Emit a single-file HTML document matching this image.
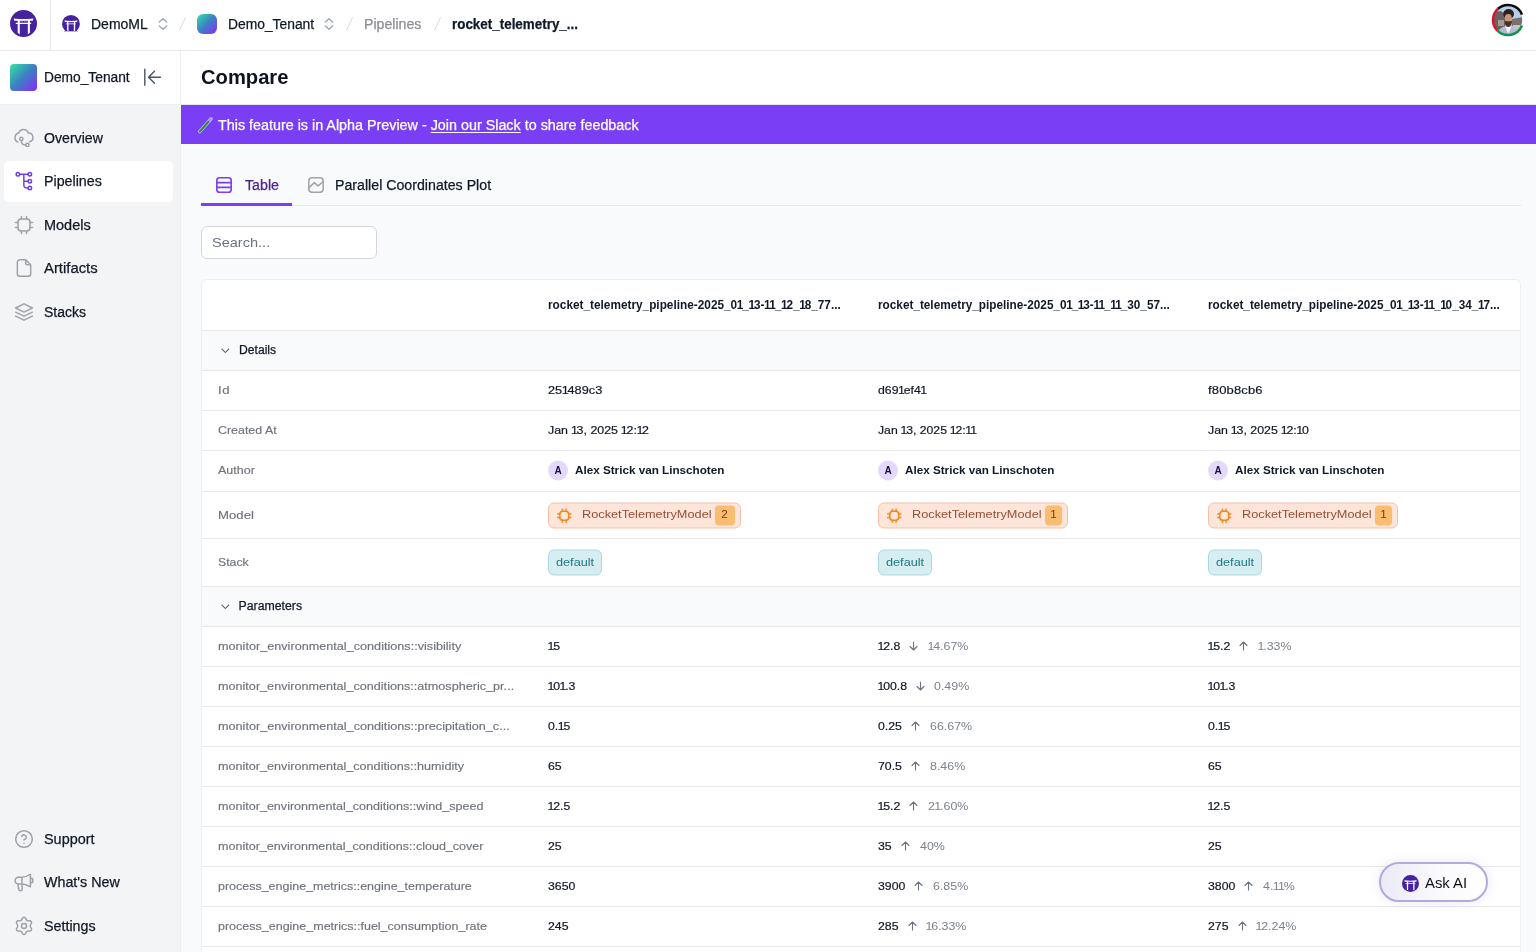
<!DOCTYPE html>
<html lang="en">
<head>
<meta charset="utf-8">
<title>Compare</title>
<style>
*{box-sizing:border-box;margin:0;padding:0}
html,body{width:1536px;height:952px;overflow:hidden;background:#f9fafb;font-family:"Liberation Sans",sans-serif;color:#111827}
#wrap{position:absolute;left:0;top:0;width:1536px;height:952px;will-change:transform}
.t{white-space:nowrap;display:inline-block;--ls:0px;letter-spacing:var(--ls);transform-origin:0 50%}
.o{font-weight:inherit;margin-left:-.5px;letter-spacing:calc(var(--ls) - 1.1px)}
.oh{font-weight:inherit;margin-left:-.4px;letter-spacing:calc(var(--ls) - 1.1px)}
svg{display:block;overflow:visible}
#top{position:absolute;left:0;top:0;width:1536px;height:51px;background:#fff;border-bottom:1px solid #e8e8ea}
#top .vdiv{position:absolute;left:50px;top:0;width:1px;height:50px;background:#e8e8ea}
.a{position:absolute}
.crumb{position:absolute;top:15px;height:18px;line-height:18px;font-size:14px;-webkit-text-stroke:.25px}
#side{position:absolute;left:0;top:51px;width:181px;height:901px;background:#f3f4f6;border-right:1px solid #eceef0}
#sidehead{position:absolute;left:0;top:0;width:180px;height:54px;background:#fff;border-bottom:1px solid #eceef0}
.nav{position:absolute;left:4px;width:169px;height:41px;border-radius:5px}
.nav .t{position:absolute;left:40px;top:11px;height:18px;line-height:18px;font-size:14px;color:#111827;-webkit-text-stroke:.25px}
.nav svg{position:absolute;left:10px;top:10px;width:20px;height:20px}
.nav.on{background:#fff}
#head{position:absolute;left:181px;top:51px;width:1355px;height:54px;background:#fff;border-bottom:1px solid #e5e7eb}
#banner{position:absolute;left:181px;top:105px;width:1355px;height:39px;background:#7a3ef4;color:#fff;font-size:14px;-webkit-text-stroke:.25px}
#tabs{position:absolute;left:201px;top:165px;width:1320px;height:41px;border-bottom:1px solid #e5e7eb;-webkit-text-stroke:.25px}
#search{position:absolute;left:201px;top:226px;width:176px;height:33px;border:1px solid #d5d6da;border-radius:6px;background:#fff}
#tbl{position:absolute;left:201px;top:279px;width:1320px;height:700px;background:#fff;border:1px solid #eceef1;border-radius:6px 6px 0 0;overflow:hidden}
.row{position:absolute;left:0;width:1318px;border-bottom:1px solid #e7e8ea;font-size:11.700px}
.row.sec{background:#f9fafb}
.c{position:absolute;top:0;height:100%;display:flex;align-items:center;transform:translateY(-.5px)}
.c .t{position:relative;top:-1px}
.c .t.nt{top:0}
.c .mb .t{top:-2.500px}
.c .sb .t{top:-1.500px}
.r41 .c{height:39px}
.c0{left:16px;color:#6e727a;-webkit-text-stroke:.15px}
.c1{left:346px}.c2{left:676px}.c3{left:1006px}
.v{font-size:11.600px;color:#111827;-webkit-text-stroke:.2px #111827;transform:scaleX(1.06)}
.p{font-size:11.600px;color:#7b818c;transform:scaleX(1.07)}
.arr{width:9px;height:9px;margin:0 9.500px 0 10.500px}
.av{width:20px;height:20px;border-radius:50%;background:#e4d8fd;margin-right:7px;display:flex;align-items:center;justify-content:center;font-weight:700;font-size:10px;color:#1a0f3a}
.mb{margin-top:2px;height:26.500px;border:1px solid #f6bfa8;background:#fde5da;border-radius:6px;display:flex;align-items:center;padding-left:8px;padding-right:5px}
.mb svg{width:16.500px;height:16.500px;margin-right:9.500px;margin-left:-1px}
.mb .n{width:20px;height:20px;background:#f8bd70;border-radius:4px;margin-left:3px;display:flex;align-items:center;justify-content:center}
.sb{height:26px;border:1px solid #a9d9e0;background:#d6edf1;border-radius:6px;display:flex;align-items:center;padding:0 7px}
</style>
</head>
<body>
<div id="wrap">
<div id="top">
  <div class="a" style="left:10px;top:10px"><svg viewBox="0 0 28 28" width="27" height="27"><circle cx="14" cy="14" r="14" fill="#4523a0"/><path d="M3.800 8.800Q14 10 24.200 8.800L23.600 11.100H4.400zM6 13.200h16v1.300H6zM8 11h2.100v14.300a14 14 0 0 1-2.100-1.600zM18.500 11h2.100v12.700a14 14 0 0 1-2.100 1.600z" fill="#fff"/><path d="M11.300 11.100v1.200M12.800 11.100v1.200M15.200 11.100v1.200M16.700 11.100v1.200" stroke="#fff" stroke-width=".7" opacity=".55"/></svg></div>
  <div class="vdiv"></div>
  <div class="a" style="left:61.500px;top:14.800px;width:18px;height:16.700px;overflow:hidden"><svg viewBox="0 0 28 28" width="17.9" height="17.9"><circle cx="14" cy="14" r="14" fill="#4523a0"/><path d="M3.800 8.800Q14 10 24.200 8.800L23.600 11.100H4.400zM6 13.200h16v1.300H6zM8 11h2.100v14.300a14 14 0 0 1-2.100-1.600zM18.500 11h2.100v12.700a14 14 0 0 1-2.100 1.600z" fill="#fff"/><path d="M11.300 11.100v1.200M12.800 11.100v1.200M15.200 11.100v1.200M16.700 11.100v1.200" stroke="#fff" stroke-width=".7" opacity=".55"/></svg></div>
  <div class="a" style="left:63.500px;top:31.300px;width:14px;height:1px;background:#bdbdc2;border-radius:1px"></div>
  <div class="crumb" style="left:91px;color:#111827"><span class="t " id="bDemoML">DemoML</span></div>
  <div class="a" style="left:158px;top:17.500px"><svg viewBox="0 0 10 12" width="10" height="12" fill="none" stroke="#9ca3af" stroke-width="1.300" stroke-linecap="round" stroke-linejoin="round"><path d="M1.300 4L5 .7l3.700 3.300M1.300 8L5 11.300 8.700 8"/></svg></div>
  <svg class="a" style="left:179px;top:17px" width="7" height="14" viewBox="0 0 7 14"><path d="M6.500.5L.5 13.500" stroke="#d9dadd" stroke-width="1" fill="none"/></svg>
  <div class="a" style="left:196.800px;top:13.500px;width:20.400px;height:20.400px;border-radius:6px;background:linear-gradient(135deg,#35e6a0 0%,#3b82c4 48%,#8b2cf5 100%)"></div>
  <div class="crumb" style="left:228px;color:#111827"><span class="t " id="bTenant" style="transform:scaleX(0.9885);margin-right:-1.00px">Demo_Tenant</span></div>
  <div class="a" style="left:323.500px;top:17.500px"><svg viewBox="0 0 10 12" width="10" height="12" fill="none" stroke="#9ca3af" stroke-width="1.300" stroke-linecap="round" stroke-linejoin="round"><path d="M1.300 4L5 .7l3.700 3.300M1.300 8L5 11.300 8.700 8"/></svg></div>
  <svg class="a" style="left:346px;top:17px" width="7" height="14" viewBox="0 0 7 14"><path d="M6.500.5L.5 13.500" stroke="#d9dadd" stroke-width="1" fill="none"/></svg>
  <div class="crumb" style="left:363.500px;color:#8b8e94"><span class="t " id="bPipelines" style="transform:scaleX(1.0091);margin-right:0.52px">Pipelines</span></div>
  <svg class="a" style="left:433.500px;top:17px" width="7" height="14" viewBox="0 0 7 14"><path d="M6.500.5L.5 13.500" stroke="#d9dadd" stroke-width="1" fill="none"/></svg>
  <div class="crumb" style="left:452px;color:#111827;font-weight:700"><span class="t " id="bRocket" style="transform:scaleX(0.9581);margin-right:-5.53px">rocket_telemetry_...</span></div>
  <svg class="a" style="left:1490.600px;top:3.200px" width="34" height="34" viewBox="0 0 34 34">
    <defs><clipPath id="avc"><circle cx="17" cy="17" r="14.200"/></clipPath><filter id="avb" x="-10%" y="-10%" width="120%" height="120%"><feGaussianBlur stdDeviation=".7"/></filter></defs>
    <g clip-path="url(#avc)"><g filter="url(#avb)">
      <rect x="0" y="0" width="34" height="34" fill="#b9cdea"/>
      <path d="M2 9l8-1 4 3v18H2z" fill="#6a625f"/>
      <rect x="7" y="17" width="6" height="6" fill="#a59b96"/>
      <path d="M21 16l11-2v9H21z" fill="#7b706b"/>
      <rect x="22" y="22" width="10" height="6" fill="#c9c4cb"/>
      <path d="M6 34c0-7 4-10.500 11-11.500 7 1 11 4.500 11 11.500z" fill="#b4bad4"/>
      <path d="M14.200 23.500L17.300 31l3.100-7.500z" fill="#f6f6fa"/>
      <ellipse cx="17.600" cy="11" rx="5.400" ry="5" fill="#2c2420"/>
      <ellipse cx="17.300" cy="15.300" rx="3.500" ry="4.400" fill="#c9967c"/>
      <path d="M13.700 17.500c1.500 1.200 5.500 1.200 7.200 0 .3 3.500-1.200 6.500-3.600 6.500s-3.900-3-3.600-6.500z" fill="#473127"/>
    </g></g>
    <path d="M6.770 6.030A15 15 0 0 1 31 11.620" fill="none" stroke="#0b0b0b" stroke-width="2.500"/>
    <path d="M6.770 6.030A15 15 0 0 0 6.390 27.610" fill="none" stroke="#d5122f" stroke-width="2.500"/>
    <path d="M6.390 27.610A15 15 0 0 0 30.950 22.520" fill="none" stroke="#12954a" stroke-width="2.500"/>
  </svg>
</div>
<div id="side">
  <div id="sidehead">
    <div class="a" style="left:10px;top:13px;width:27px;height:27px;border-radius:4px;background:linear-gradient(135deg,#35e6a0 0%,#3b82c4 48%,#8b2cf5 100%)"></div>
    <div class="a" style="left:44px;top:17px;height:18px;line-height:18px;font-size:14px;color:#111827;-webkit-text-stroke:.25px"><span class="t " id="sTenant" style="transform:scaleX(0.9830);margin-right:-1.48px">Demo_Tenant</span></div>
    <svg class="a" style="left:143px;top:17px" width="19" height="18" viewBox="0 0 19 18" fill="none" stroke="#4b5563" stroke-width="1.400" stroke-linecap="round" stroke-linejoin="round"><path d="M1.800 1.300v16M17.500 9.300H5.500M11.500 3.300l-6 6 6 6"/></svg>
  </div>
  <div class="nav" style="top:66.5px"><svg viewBox="0 0 24 24" fill="none" stroke="#9fa2a8" stroke-width="1.800" stroke-linecap="round" stroke-linejoin="round"><path d="M4.700 16.900A5.730 5.730 0 0 1 5.800 6 5.900 5.900 0 0 1 17.100 6a5.410 5.410 0 0 1 1.700 10.600"/><circle cx="8.800" cy="13.100" r="1.950"/><circle cx="16.100" cy="20.300" r="1.950"/><path d="M8.800 15.200c0 3.200 2.200 5.100 5.200 5.100"/></svg><span class="t " id="nOverview" style="transform:scaleX(1.0086);margin-right:0.50px">Overview</span></div><div class="nav on" style="top:110.0px"><svg viewBox="0 0 24 24" fill="none" stroke="#6e40e6" stroke-width="1.800" stroke-linecap="round" stroke-linejoin="round"><circle cx="4.700" cy="4" r="2.100"/><circle cx="19" cy="4" r="2.100"/><circle cx="19" cy="12.400" r="2.100"/><circle cx="19" cy="20.400" r="2.100"/><path d="M6.800 4h10.100M11.800 4v12.400c0 2.600 1.400 4 4 4h1.100M11.800 12.400h5.100"/></svg><span class="t " id="nPipelines" style="transform:scaleX(1.0179);margin-right:1.02px">Pipelines</span></div><div class="nav" style="top:153.5px"><svg viewBox="0 0 24 24" fill="none" stroke="#9fa2a8" stroke-width="1.800" stroke-linecap="round" stroke-linejoin="round"><rect x="4.800" y="4.800" width="14.400" height="14.400" rx="3.800"/><path d="M9 1.800v3M15 1.800v3M9 19.200v3M15 19.200v3M19.200 9h3M19.200 15h3M1.800 9h3M1.800 15h3"/></svg><span class="t " id="nModels" style="transform:scaleX(1.0340);margin-right:1.53px">Models</span></div><div class="nav" style="top:197.0px"><svg viewBox="0 0 24 24" fill="none" stroke="#9fa2a8" stroke-width="1.800" stroke-linecap="round" stroke-linejoin="round"><path d="M14 2.300V6.400c0 .9.700 1.600 1.600 1.600h4.100M14 2H7.200A3.200 3.200 0 0 0 4 5.200V18.800A3.200 3.200 0 0 0 7.200 22H16.800A3.200 3.200 0 0 0 20 18.800V8Z"/></svg><span class="t " id="nArtifacts" style="transform:scaleX(1.0602);margin-right:3.07px">Artifacts</span></div><div class="nav" style="top:240.5px"><svg viewBox="0 0 24 24" fill="none" stroke="#9fa2a8" stroke-width="1.800" stroke-linecap="round" stroke-linejoin="round"><path d="M2 12.200l10 4.800 10-4.800M2 16.900l10 4.800 10-4.800M2 7.200l10-5 10 5-10 5z"/></svg><span class="t " id="nStacks">Stacks</span></div><div class="nav" style="top:767.5px"><svg viewBox="0 0 24 24" fill="none" stroke="#9fa2a8" stroke-width="1.800" stroke-linecap="round" stroke-linejoin="round"><circle cx="12" cy="12" r="10"/><path d="M9.1 9a3 3 0 0 1 5.8 1c0 2-3 3-3 3M12 17h.01"/></svg><span class="t " id="nSupport" style="transform:scaleX(1.0304);margin-right:1.49px">Support</span></div><div class="nav" style="top:811.0px"><svg viewBox="0 0 24 24" fill="none" stroke="#9fa2a8" stroke-width="1.800" stroke-linecap="round" stroke-linejoin="round"><path d="M9.500 6.300H5.300a4 4 0 0 0 0 8h4.200M9.500 6.300c3.500 0 7.400-1.800 9.300-3.300.4-.3.900 0 .900.500v13.600c0 .5-.5.800-.900.500-1.900-1.500-5.800-3.300-9.300-3.300zM4.500 14.300l1.200 6.600c.15.900.900 1.500 1.800 1.500h.6c1.100 0 2-.900 1.800-2L9.500 14.300M19.700 7.300a3 3 0 0 1 0 6"/></svg><span class="t " id="nWhatsNew" style="transform:scaleX(1.0200);margin-right:1.48px">What's New</span></div><div class="nav" style="top:854.5px"><svg viewBox="0 0 24 24" fill="none" stroke="#9fa2a8" stroke-width="1.800" stroke-linecap="round" stroke-linejoin="round"><circle cx="12" cy="12" r="3"/><path d="M9.300 19.400l.6 1.300a2.300 2.300 0 0 0 4.200 0l.6-1.300a2.500 2.500 0 0 1 2.500-1.500l1.400.2a2.300 2.300 0 0 0 2.100-3.600l-.8-1.200a2.500 2.500 0 0 1 0-2.900l.8-1.200a2.300 2.300 0 0 0-2.100-3.600l-1.400.2a2.500 2.500 0 0 1-2.500-1.500l-.6-1.300a2.300 2.300 0 0 0-4.200 0l-.6 1.300a2.500 2.500 0 0 1-2.500 1.500l-1.400-.2a2.300 2.300 0 0 0-2.100 3.600l.8 1.200a2.500 2.500 0 0 1 0 2.900l-.8 1.200a2.300 2.300 0 0 0 2.100 3.600l1.400-.2a2.500 2.500 0 0 1 2.500 1.500z"/></svg><span class="t " id="nSettings" style="transform:scaleX(1.0202);margin-right:1.03px">Settings</span></div>
</div>
<div id="head"><div class="a" style="left:20px;top:13px;height:26px;line-height:26px;font-size:20px;font-weight:700;color:#0f1320"><span class="t " id="hCompare" style="transform:scaleX(1.0087);margin-right:0.76px">Compare</span></div></div>
<div id="banner">
  <svg class="a" style="left:16px;top:11px" width="18" height="18" viewBox="0 0 18 18" fill="none" stroke-linecap="round"><path d="M2.700 15.600L14 2.800" stroke="#cbbcfb" stroke-width="3.400"/><path d="M11.300 5.900L13.700 3.200" stroke="#9a86e6" stroke-width="1.900"/><path d="M2.900 15.400L11.100 6.100" stroke="#1f8f2e" stroke-width="2.100"/></svg>
  <div class="a" style="left:37px;top:11px;height:18px;line-height:18px"><span class="t " id="bnr" style="transform:scaleX(1.0237);margin-right:9.74px">This feature is in Alpha Preview - <u style="text-underline-offset:2px">Join our Slack</u> to share feedback</span></div>
</div>
<div id="tabs">
  <svg class="a" style="left:15px;top:12px" width="16" height="16" viewBox="0 0 16 16" fill="none" stroke="#7a3ef4" stroke-width="1.600" stroke-linejoin="round"><rect x=".8" y=".8" width="14.400" height="14.400" rx="2.800"/><path d="M.8 5.600h14.400M.8 10.400h14.400"/></svg>
  <div class="a" style="left:44px;top:11px;height:18px;line-height:18px;font-size:14px;color:#492592"><span class="t " id="tTable" style="transform:scaleX(1.0155);margin-right:0.51px">Table</span></div>
  <div class="a" style="left:0;top:38px;width:91px;height:3px;background:#7a3ef4"></div>
  <svg class="a" style="left:107px;top:12px" width="16" height="16" viewBox="0 0 16 16" fill="none" stroke="#a3a3a8" stroke-width="1.500" stroke-linejoin="round" stroke-linecap="round"><rect x=".8" y=".8" width="14.400" height="14.400" rx="3.200"/><path d="M1 10.600l5.400-5 3.600 3.300 5-4.200"/></svg>
  <div class="a" style="left:133.500px;top:11px;height:18px;line-height:18px;font-size:14px;color:#111827"><span class="t " id="tPlot" style="transform:scaleX(1.0130);margin-right:2.00px">Parallel Coordinates Plot</span></div>
</div>
<div id="search"><div class="a" style="left:10px;top:7px;height:18px;line-height:18px;font-size:13.500px;color:#6b7280"><span class="t " id="srch" style="transform:scaleX(1.0769);margin-right:4.15px">Search...</span></div></div>
<div id="tbl"><div class="row" style="top:0px;height:51px"><div class="c c1"><span class="t nt" id="h1" style="font-weight:700;color:#111827;font-size:12px;transform:scaleX(0.9847);margin-right:-4.54px">rocket_telemetry_pipeline-2025_0<b class="oh">1</b>_<b class="oh">1</b>3-<b class="oh">1</b><b class="oh">1</b>_<b class="oh">1</b>2_<b class="oh">1</b>8_77...</span></div><div class="c c2"><span class="t nt" id="h2" style="font-weight:700;color:#111827;font-size:12px;transform:scaleX(0.9815);margin-right:-5.49px">rocket_telemetry_pipeline-2025_0<b class="oh">1</b>_<b class="oh">1</b>3-<b class="oh">1</b><b class="oh">1</b>_<b class="oh">1</b><b class="oh">1</b>_30_57...</span></div><div class="c c3"><span class="t nt" id="h3" style="font-weight:700;color:#111827;font-size:12px;transform:scaleX(0.9815);margin-right:-5.49px">rocket_telemetry_pipeline-2025_0<b class="oh">1</b>_<b class="oh">1</b>3-<b class="oh">1</b><b class="oh">1</b>_<b class="oh">1</b>0_34_<b class="oh">1</b>7...</span></div></div>
<div class="row sec" style="top:51px;height:40px"><div class="c" style="left:18.500px;padding-top:1.500px"><svg viewBox="0 0 10 6" width="8.600" height="4.800" fill="none" stroke="#4b5563" stroke-width="1.300" stroke-linecap="round" stroke-linejoin="round"><path d="M.8.8L5 5 9.200.8"/></svg></div><div class="c" style="left:36.500px"><span class="t " id="sDetails" style="color:#111827;-webkit-text-stroke:.25px;font-size:12.300px;transform:scaleX(0.9871);margin-right:-0.49px">Details</span></div></div>
<div class="row" style="top:91px;height:40px"><div class="c c0"><span class="t " id="id0" style="--ls:0.482px;transform:scaleX(1.1200);margin-right:1.32px">Id</span></div><div class="c c1"><span class="t v" id="id1" style="transform:scaleX(1.0987);margin-right:4.84px">25<b class="o">1</b>489c3</span></div><div class="c c2"><span class="t v" id="id2">d69<b class="o">1</b>ef4<b class="o">1</b></span></div><div class="c c3"><span class="t v" id="id3" style="--ls:0.138px;transform:scaleX(1.1200);margin-right:5.88px">f80b8cb6</span></div></div>
<div class="row" style="top:131px;height:40px"><div class="c c0"><span class="t " id="cr0" style="transform:scaleX(1.0627);margin-right:3.45px">Created At</span></div><div class="c c1"><span class="t v" id="cr1" style="transform:scaleX(1.0684);margin-right:6.50px">Jan <b class="o">1</b>3, 2025 <b class="o">1</b>2:<b class="o">1</b>2</span></div><div class="c c2"><span class="t v" id="cr2" style="transform:scaleX(1.0533);margin-right:4.96px">Jan <b class="o">1</b>3, 2025 <b class="o">1</b>2:<b class="o">1</b><b class="o">1</b></span></div><div class="c c3"><span class="t v" id="cr3" style="transform:scaleX(1.0659);margin-right:6.26px">Jan <b class="o">1</b>3, 2025 <b class="o">1</b>2:<b class="o">1</b>0</span></div></div>
<div class="row r41" style="top:171px;height:41px"><div class="c c0"><span class="t " id="au0" style="transform:scaleX(1.0717);margin-right:2.44px">Author</span></div><div class="c c1"><div class="av">A</div><span class="t " id="au1" style="font-weight:700;color:#111827">Alex Strick van Linschoten</span></div><div class="c c2"><div class="av">A</div><span class="t " id="au2" style="font-weight:700;color:#111827">Alex Strick van Linschoten</span></div><div class="c c3"><div class="av">A</div><span class="t " id="au3" style="font-weight:700;color:#111827">Alex Strick van Linschoten</span></div></div>
<div class="row" style="top:212px;height:47px"><div class="c c0"><span class="t " id="mo0" style="--ls:0.049px;transform:scaleX(1.1200);margin-right:3.84px">Model</span></div><div class="c c1"><div class="mb"><svg viewBox="0 0 24 24" fill="none" stroke="#ef8a1d" stroke-width="2.200" stroke-linecap="round" stroke-linejoin="round"><rect x="5.500" y="5.500" width="13" height="13" rx="4.500"/><path d="M9.300 2.500v3M14.700 2.500v3M9.300 18.500v3M14.700 18.500v3M18.500 9.300h3M18.500 14.700h3M2.500 9.300h3M2.500 14.700h3"/></svg><span class="t " id="mo1" style="color:#964f35;transform:scaleX(1.0899);margin-right:10.70px">RocketTelemetryModel</span><div class="n"><span class="t " id="mn1" style="color:#7a3a10">2</span></div></div></div><div class="c c2"><div class="mb"><svg viewBox="0 0 24 24" fill="none" stroke="#ef8a1d" stroke-width="2.200" stroke-linecap="round" stroke-linejoin="round"><rect x="5.500" y="5.500" width="13" height="13" rx="4.500"/><path d="M9.300 2.500v3M14.700 2.500v3M9.300 18.500v3M14.700 18.500v3M18.500 9.300h3M18.500 14.700h3M2.500 9.300h3M2.500 14.700h3"/></svg><span class="t " id="mo2" style="color:#964f35;transform:scaleX(1.0899);margin-right:10.70px">RocketTelemetryModel</span><div class="n" style="width:17.700px"><span class="t " id="mn2" style="color:#7a3a10">1</span></div></div></div><div class="c c3"><div class="mb"><svg viewBox="0 0 24 24" fill="none" stroke="#ef8a1d" stroke-width="2.200" stroke-linecap="round" stroke-linejoin="round"><rect x="5.500" y="5.500" width="13" height="13" rx="4.500"/><path d="M9.300 2.500v3M14.700 2.500v3M9.300 18.500v3M14.700 18.500v3M18.500 9.300h3M18.500 14.700h3M2.500 9.300h3M2.500 14.700h3"/></svg><span class="t " id="mo3" style="color:#964f35;transform:scaleX(1.0899);margin-right:10.70px">RocketTelemetryModel</span><div class="n" style="width:17.700px"><span class="t " id="mn3" style="color:#7a3a10">1</span></div></div></div></div>
<div class="row" style="top:259px;height:48px"><div class="c c0"><span class="t " id="st0" style="transform:scaleX(1.0507);margin-right:1.47px">Stack</span></div><div class="c c1"><div class="sb"><span class="t " id="st1" style="color:#1d7b82;transform:scaleX(1.0862);margin-right:3.02px">default</span></div></div><div class="c c2"><div class="sb"><span class="t " id="st2" style="color:#1d7b82;transform:scaleX(1.0862);margin-right:3.02px">default</span></div></div><div class="c c3"><div class="sb"><span class="t " id="st3" style="color:#1d7b82;transform:scaleX(1.0862);margin-right:3.02px">default</span></div></div></div>
<div class="row sec" style="top:307px;height:40px"><div class="c" style="left:18.500px;padding-top:1.500px"><svg viewBox="0 0 10 6" width="8.600" height="4.800" fill="none" stroke="#4b5563" stroke-width="1.300" stroke-linecap="round" stroke-linejoin="round"><path d="M.8.8L5 5 9.200.8"/></svg></div><div class="c" style="left:36.500px"><span class="t " id="sParams" style="color:#111827;-webkit-text-stroke:.25px;font-size:12.300px">Parameters</span></div></div>
<div class="row" style="top:347px;height:40px"><div class="c c0"><span class="t " id="p0_0" style="transform:scaleX(1.0823);margin-right:18.52px">monitor_environmental_conditions::visibility</span></div><div class="c c1"><span class="t v" id="p0_1"><b class="o">1</b>5</span></div><div class="c c2"><span class="t v" id="p0_2"><b class="o">1</b>2.8</span><svg class="arr" viewBox="0 0 9 9" fill="none" stroke="#6b7280" stroke-width="1.1" stroke-linecap="round" stroke-linejoin="round"><path d="M4.5.5v8M1 5l3.500 3.500L8 5"/></svg><span class="t p" id="p0_2p"><b class="o">1</b>4.67%</span></div><div class="c c3"><span class="t v" id="p0_3"><b class="o">1</b>5.2</span><svg class="arr" viewBox="0 0 9 9" fill="none" stroke="#6b7280" stroke-width="1.1" stroke-linecap="round" stroke-linejoin="round"><path d="M4.5 8.5v-8M1 4L4.5.5 8 4"/></svg><span class="t p" id="p0_3p"><b class="o">1</b>.33%</span></div></div>
<div class="row" style="top:387px;height:40px"><div class="c c0"><span class="t " id="p1_0" style="transform:scaleX(1.0802);margin-right:21.97px">monitor_environmental_conditions::atmospheric_pr...</span></div><div class="c c1"><span class="t v" id="p1_1"><b class="o">1</b>0<b class="o">1</b>.3</span></div><div class="c c2"><span class="t v" id="p1_2"><b class="o">1</b>00.8</span><svg class="arr" viewBox="0 0 9 9" fill="none" stroke="#6b7280" stroke-width="1.1" stroke-linecap="round" stroke-linejoin="round"><path d="M4.5.5v8M1 5l3.500 3.500L8 5"/></svg><span class="t p" id="p1_2p">0.49%</span></div><div class="c c3"><span class="t v" id="p1_3"><b class="o">1</b>0<b class="o">1</b>.3</span></div></div>
<div class="row" style="top:427px;height:40px"><div class="c c0"><span class="t " id="p2_0" style="transform:scaleX(1.0818);margin-right:22.09px">monitor_environmental_conditions::precipitation_c...</span></div><div class="c c1"><span class="t v" id="p2_1">0.<b class="o">1</b>5</span></div><div class="c c2"><span class="t v" id="p2_2">0.25</span><svg class="arr" viewBox="0 0 9 9" fill="none" stroke="#6b7280" stroke-width="1.1" stroke-linecap="round" stroke-linejoin="round"><path d="M4.5 8.5v-8M1 4L4.5.5 8 4"/></svg><span class="t p" id="p2_2p">66.67%</span></div><div class="c c3"><span class="t v" id="p2_3">0.<b class="o">1</b>5</span></div></div>
<div class="row" style="top:467px;height:40px"><div class="c c0"><span class="t " id="p3_0" style="transform:scaleX(1.0790);margin-right:18.01px">monitor_environmental_conditions::humidity</span></div><div class="c c1"><span class="t v" id="p3_1">65</span></div><div class="c c2"><span class="t v" id="p3_2">70.5</span><svg class="arr" viewBox="0 0 9 9" fill="none" stroke="#6b7280" stroke-width="1.1" stroke-linecap="round" stroke-linejoin="round"><path d="M4.5 8.5v-8M1 4L4.5.5 8 4"/></svg><span class="t p" id="p3_2p">8.46%</span></div><div class="c c3"><span class="t v" id="p3_3">65</span></div></div>
<div class="row" style="top:507px;height:40px"><div class="c c0"><span class="t " id="p4_0" style="transform:scaleX(1.0749);margin-right:18.50px">monitor_environmental_conditions::wind_speed</span></div><div class="c c1"><span class="t v" id="p4_1"><b class="o">1</b>2.5</span></div><div class="c c2"><span class="t v" id="p4_2"><b class="o">1</b>5.2</span><svg class="arr" viewBox="0 0 9 9" fill="none" stroke="#6b7280" stroke-width="1.1" stroke-linecap="round" stroke-linejoin="round"><path d="M4.5 8.5v-8M1 4L4.5.5 8 4"/></svg><span class="t p" id="p4_2p">2<b class="o">1</b>.60%</span></div><div class="c c3"><span class="t v" id="p4_3"><b class="o">1</b>2.5</span></div></div>
<div class="row" style="top:547px;height:40px"><div class="c c0"><span class="t " id="p5_0" style="transform:scaleX(1.0726);margin-right:18.00px">monitor_environmental_conditions::cloud_cover</span></div><div class="c c1"><span class="t v" id="p5_1">25</span></div><div class="c c2"><span class="t v" id="p5_2">35</span><svg class="arr" viewBox="0 0 9 9" fill="none" stroke="#6b7280" stroke-width="1.1" stroke-linecap="round" stroke-linejoin="round"><path d="M4.5 8.5v-8M1 4L4.5.5 8 4"/></svg><span class="t p" id="p5_2p">40%</span></div><div class="c c3"><span class="t v" id="p5_3">25</span></div></div>
<div class="row" style="top:587px;height:40px"><div class="c c0"><span class="t " id="p6_0" style="transform:scaleX(1.0674);margin-right:16.04px">process_engine_metrics::engine_temperature</span></div><div class="c c1"><span class="t v" id="p6_1">3650</span></div><div class="c c2"><span class="t v" id="p6_2">3900</span><svg class="arr" viewBox="0 0 9 9" fill="none" stroke="#6b7280" stroke-width="1.1" stroke-linecap="round" stroke-linejoin="round"><path d="M4.5 8.5v-8M1 4L4.5.5 8 4"/></svg><span class="t p" id="p6_2p">6.85%</span></div><div class="c c3"><span class="t v" id="p6_3">3800</span><svg class="arr" viewBox="0 0 9 9" fill="none" stroke="#6b7280" stroke-width="1.1" stroke-linecap="round" stroke-linejoin="round"><path d="M4.5 8.5v-8M1 4L4.5.5 8 4"/></svg><span class="t p" id="p6_3p">4.<b class="o">1</b><b class="o">1</b>%</span></div></div>
<div class="row" style="top:627px;height:40px"><div class="c c0"><span class="t " id="p7_0" style="transform:scaleX(1.0697);margin-right:17.49px">process_engine_metrics::fuel_consumption_rate</span></div><div class="c c1"><span class="t v" id="p7_1">245</span></div><div class="c c2"><span class="t v" id="p7_2">285</span><svg class="arr" viewBox="0 0 9 9" fill="none" stroke="#6b7280" stroke-width="1.1" stroke-linecap="round" stroke-linejoin="round"><path d="M4.5 8.5v-8M1 4L4.5.5 8 4"/></svg><span class="t p" id="p7_2p"><b class="o">1</b>6.33%</span></div><div class="c c3"><span class="t v" id="p7_3">275</span><svg class="arr" viewBox="0 0 9 9" fill="none" stroke="#6b7280" stroke-width="1.1" stroke-linecap="round" stroke-linejoin="round"><path d="M4.5 8.5v-8M1 4L4.5.5 8 4"/></svg><span class="t p" id="p7_3p"><b class="o">1</b>2.24%</span></div></div>
<div class="row" style="top:667px;height:40px"><div class="c c0"><span class="t " id="p8_0">process_engine_metrics::thrust_output</span></div><div class="c c1"><span class="t v" id="p8_1"><b class="o">1</b>200</span></div><div class="c c2"><span class="t v" id="p8_2"><b class="o">1</b>250</span><svg class="arr" viewBox="0 0 9 9" fill="none" stroke="#6b7280" stroke-width="1.1" stroke-linecap="round" stroke-linejoin="round"><path d="M4.5 8.5v-8M1 4L4.5.5 8 4"/></svg><span class="t p" id="p8_2p">4.<b class="o">1</b>7%</span></div><div class="c c3"><span class="t v" id="p8_3"><b class="o">1</b>225</span><svg class="arr" viewBox="0 0 9 9" fill="none" stroke="#6b7280" stroke-width="1.1" stroke-linecap="round" stroke-linejoin="round"><path d="M4.5 8.5v-8M1 4L4.5.5 8 4"/></svg><span class="t p" id="p8_3p">2.08%</span></div></div></div>
<div class="a" style="left:1379px;top:862px;width:109px;height:40px;border-radius:20px;border:2px solid #b3a9de;background:linear-gradient(90deg,#eceaf6 0%,#fbfbfe 60%,#ffffff 100%);box-shadow:0 0 10px 2px rgba(140,120,220,.13)">
  <div class="a" style="left:20.500px;top:10.500px"><svg viewBox="0 0 28 28" width="17" height="17"><circle cx="14" cy="14" r="14" fill="#4523a0"/><path d="M3.800 8.800Q14 10 24.200 8.800L23.600 11.100H4.400zM6 13.200h16v1.300H6zM8 11h2.100v14.300a14 14 0 0 1-2.100-1.600zM18.500 11h2.100v12.700a14 14 0 0 1-2.100 1.600z" fill="#fff"/><path d="M11.300 11.100v1.200M12.800 11.100v1.200M15.200 11.100v1.200M16.700 11.100v1.200" stroke="#fff" stroke-width=".7" opacity=".55"/></svg></div>
  <div class="a" style="left:44px;top:9px;height:20px;line-height:20px;font-size:14.500px;color:#111"><span class="t " id="askai" style="transform:scaleX(1.0250);margin-right:1.02px">Ask AI</span></div>
</div>
</div>
</body>
</html>
